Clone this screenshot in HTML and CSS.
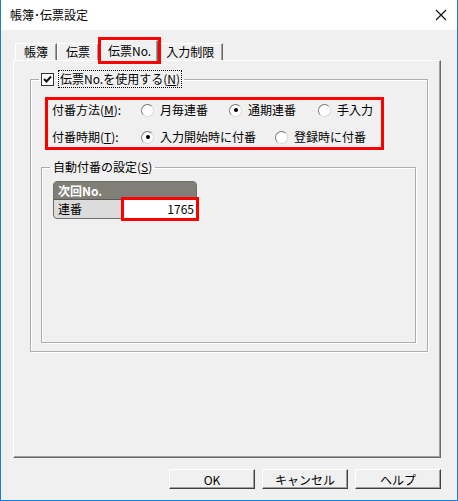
FILE: index.html
```html
<!DOCTYPE html>
<html>
<head>
    <title>帳簿･伝票設定</title>
    <link rel="stylesheet" href="styles.css">
</head>
<body>

    <div class="window">
        <!-- Title bar -->
        <div class="titlebar">
            <span class="title">帳簿･伝票設定</span>
            <svg class="close" width="12" height="12" viewBox="0 0 12 12">
                <path d="M1 1 L11 11 M11 1 L1 11" stroke="#111" stroke-width="1.2" fill="none"/>
            </svg>
        </div>

        <div class="client">
            <div class="tabs">
                <div class="tab">帳簿</div>
                <div class="tab">伝票</div>
                <div class="tab active">伝票No.</div>
                <div class="tab">入力制限</div>
            </div>

            <div class="panel">
                <fieldset class="group outer">
                    <legend class="legend-check">
                        <span class="checkbox">
                            <svg width="11" height="11" viewBox="0 0 11 11">
                                <path d="M2 5 L4.5 7.5 L9 2.5" stroke="#111" stroke-width="2" fill="none"/>
                            </svg>
                        </span>
                        <span class="focus">伝票No.を使用する(<u>N</u>)</span>
                    </legend>

                    <div class="options">
                        <div class="opt-row">
                            <span class="opt-label">付番方法(<u>M</u>):</span>
                            <span class="radio w88"><span class="circle"></span>月毎連番</span>
                            <span class="radio w89"><span class="circle checked"></span>通期連番</span>
                            <span class="radio"><span class="circle"></span>手入力</span>
                        </div>
                        <div class="opt-row">
                            <span class="opt-label">付番時期(<u>T</u>):</span>
                            <span class="radio w134"><span class="circle checked"></span>入力開始時に付番</span>
                            <span class="radio"><span class="circle"></span>登録時に付番</span>
                        </div>
                    </div>

                    <fieldset class="group inner">
                        <legend class="legend-text">自動付番の設定(<u>S</u>)</legend>
                        <div class="grid">
                            <div class="grid-head">次回No.</div>
                            <div class="grid-row">
                                <span class="grid-name">連番</span>
                                <span class="grid-value">1765</span>
                            </div>
                        </div>
                    </fieldset>
                </fieldset>
            </div>

            <div class="buttons">
                <button class="btn">OK</button>
                <button class="btn">キャンセル</button>
                <button class="btn">ヘルプ</button>
            </div>
        </div>
    </div>

</body>
</html>
```

FILE: styles.css
```css
    body {
        margin: 0;
        padding: 0;
        font-family: "Noto Sans CJK JP", "Liberation Sans", sans-serif;
        font-size: 12px;
        line-height: 16px;
        color: #000;
        background: #fff;
    }

    .window {
        width: 458px;
        height: 501px;
        box-sizing: border-box;
        border: 1px solid #1a7fd4;
        border-top: none;
        background: #f0f0f0;
        display: flex;
        flex-direction: column;
    }

    .titlebar {
        height: 30px;
        background: #fff;
        display: flex;
        align-items: center;
        justify-content: space-between;
        padding: 0 10px 0 9px;
    }

    .title {
        font-size: 12px;
        color: #000;
    }

    .close {
        display: block;
    }

    .client {
        padding: 10px 16px 0 12px;
    }

    /* tabs */
    .tabs {
        display: flex;
        align-items: flex-end;
        height: 20px;
        padding-left: 2px;
    }

    .tab {
        height: 16px;
        padding: 0 8px;
        border-top: 1px solid #fff;
        border-left: 1px solid #fff;
        border-right: 1px solid #696969;
        box-shadow: inset -1px 0 #a0a0a0;
        white-space: nowrap;
    }

    .tab.active {
        height: 20px;
        line-height: 20px;
        padding: 0 6px;
        margin: 0 -1px 0 2px;
        position: relative;
        z-index: 1;
        margin-bottom: -1px;
        background: #f0f0f0;
        outline: 3px solid #f00;
        outline-offset: 0;
    }

    .panel {
        width: 428px;
        height: 398px;
        box-sizing: border-box;
        border-top: 1px solid #fff;
        border-left: 1px solid #fff;
        border-right: 1px solid #696969;
        border-bottom: 1px solid #696969;
        box-shadow: inset -1px -1px #a0a0a0;
        padding: 9px 0 0 16px;
    }

    /* group boxes */
    .group {
        margin: 0;
        padding: 0;
        min-width: 0;
        border: 1px solid #adadad;
        box-shadow: 1px 1px #fff, inset 1px 1px #fff;
        box-sizing: border-box;
    }

    .group.outer {
        width: 398px;
        height: 282px;
    }

    .group.inner {
        width: 375px;
        height: 184px;
        margin: 9px 0 0 10px;
    }

    .legend-check {
        margin-left: 8px;
        padding: 0 2px;
        display: flex;
        align-items: center;
        gap: 4px;
    }

    .checkbox {
        width: 11px;
        height: 11px;
        background: #fff;
        border: 1px solid #333;
        display: flex;
    }

    .focus {
        border: 1px dotted #000;
        padding: 0 1px;
    }

    .legend-text {
        margin-left: 8px;
        padding: 0 3px;
    }

    /* options */
    .options {
        width: 339px;
        height: 53px;
        box-sizing: border-box;
        border: 3px solid #f00;
        margin: 9px 0 0 14px;
        padding: 2px 0 0 4px;
        display: flex;
        flex-direction: column;
        gap: 11px;
    }

    .opt-row {
        display: flex;
        align-items: center;
        height: 16px;
    }

    .opt-label {
        width: 89px;
    }

    .radio {
        display: flex;
        align-items: center;
        gap: 6px;
    }

    .w88 { width: 88px; }
    .w89 { width: 89px; }
    .w134 { width: 134px; }

    .circle {
        width: 11px;
        height: 11px;
        border-radius: 50%;
        background: #fff;
        border: 1px solid;
        border-color: #7a7a7a #d8d8d8 #d8d8d8 #7a7a7a;
        display: flex;
        align-items: center;
        justify-content: center;
    }

    .circle.checked::after {
        content: "";
        width: 4px;
        height: 4px;
        border-radius: 50%;
        background: #000;
    }

    /* grid */
    .grid {
        width: 144px;
        margin: 6px 0 0 11px;
        border: 1px solid #6e6e66;
        border-radius: 4px;
        background: #dcdcdc;
        box-sizing: border-box;
    }

    .grid-head {
        height: 17px;
        background: #7f7f77;
        color: #fff;
        font-weight: bold;
        padding-left: 4px;
        line-height: 17px;
        border-bottom: 1px solid #5a5a54;
        border-radius: 3px 3px 0 0;
    }

    .grid-row {
        display: flex;
        height: 18px;
        border-radius: 0 0 3px 3px;
    }

    .grid-name {
        width: 65px;
        padding-left: 4px;
        line-height: 18px;
    }

    .grid-value {
        width: 70px;
        margin-left: 1px;
        background: #fff;
        text-align: right;
        padding-right: 2px;
        line-height: 17px;
        outline: 3px solid #f00;
        position: relative;
        z-index: 1;
    }

    /* buttons */
    .buttons {
        display: flex;
        justify-content: flex-end;
        gap: 7px;
        margin-top: 11px;
    }

    .btn {
        width: 86px;
        height: 20px;
        padding: 0;
        font-family: inherit;
        font-size: 12px;
        background: #f0f0f0;
        border: 1px solid;
        border-color: #fff #404040 #404040 #fff;
        box-shadow: inset -1px -1px #a0a0a0;
        color: #000;
    }
```
